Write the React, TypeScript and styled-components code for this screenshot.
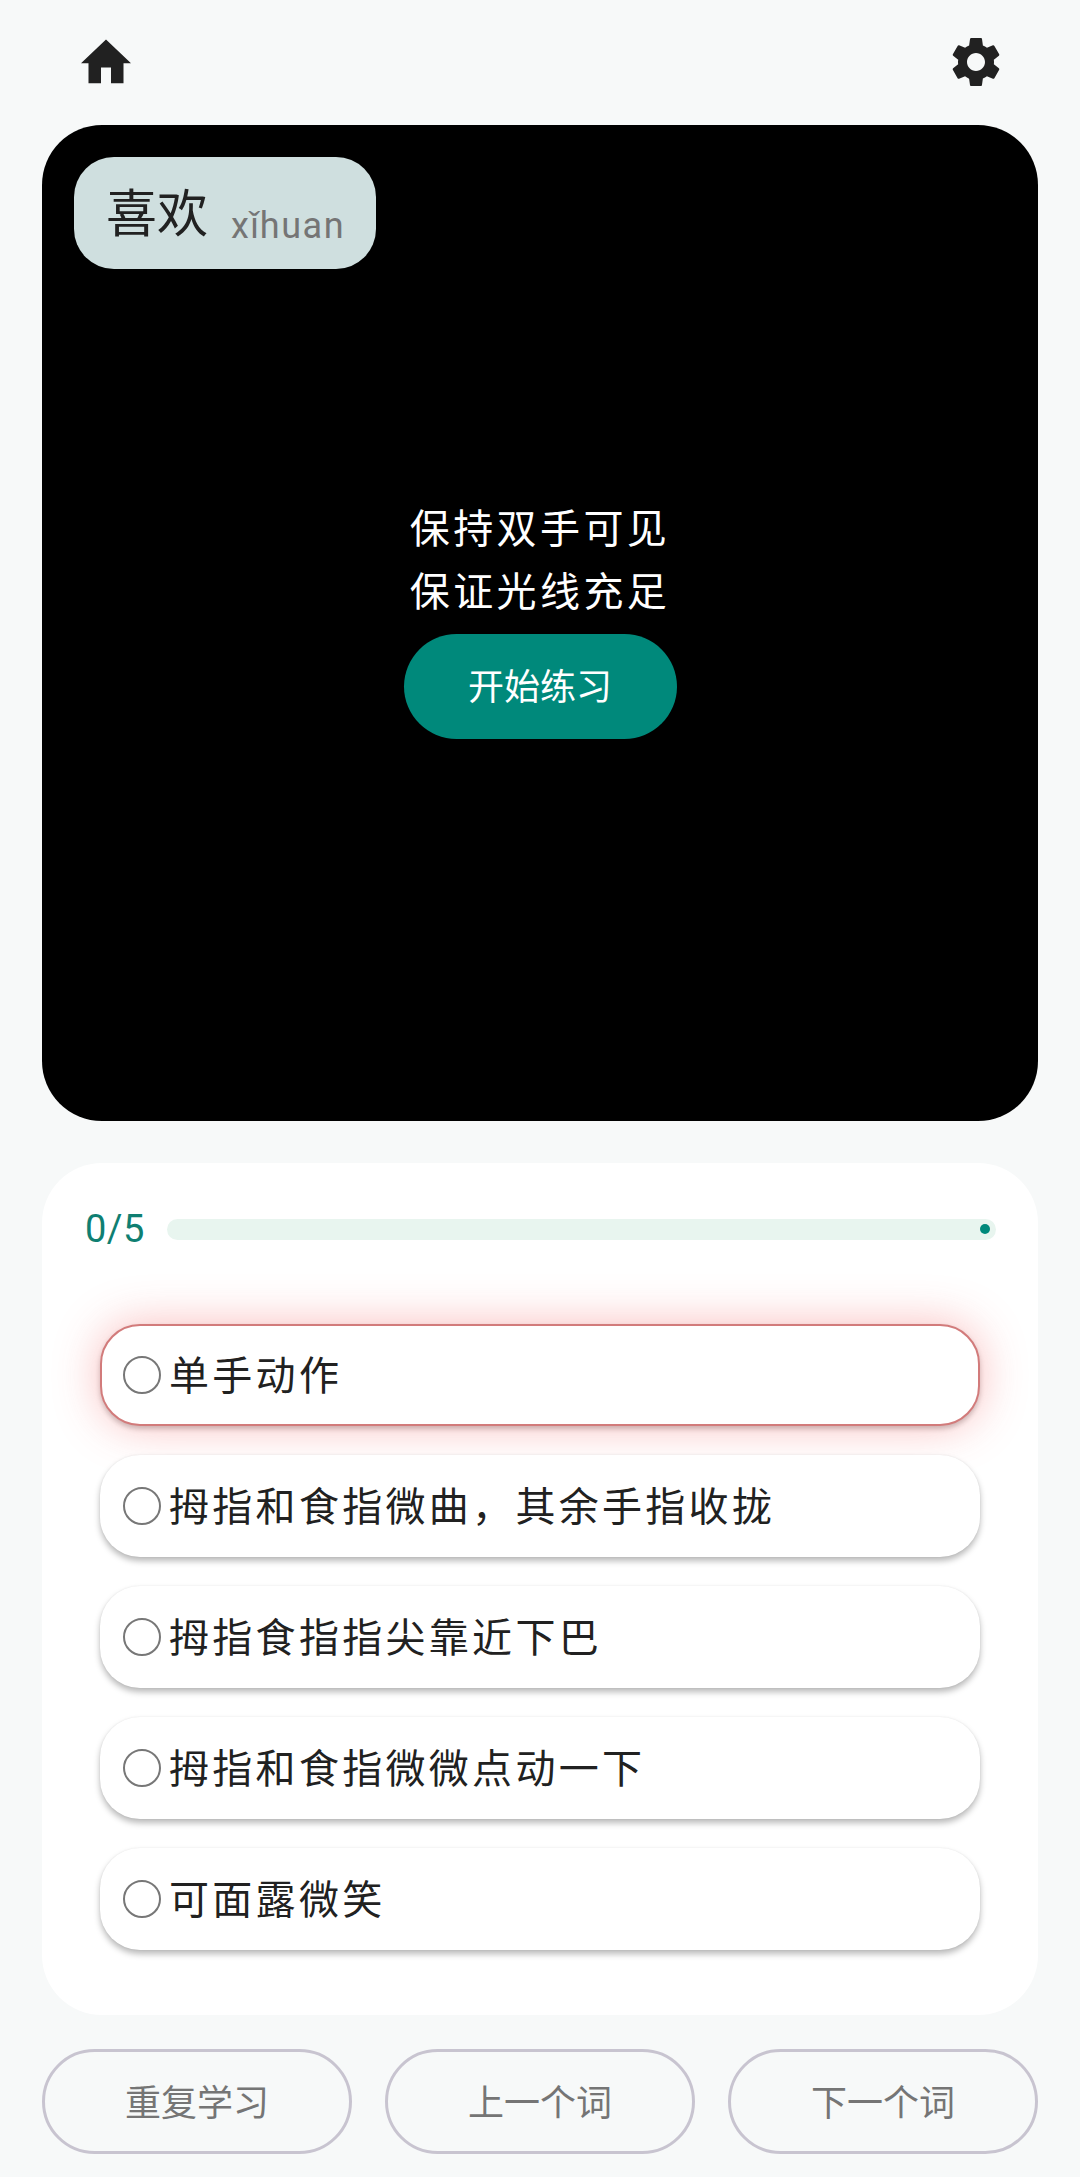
import React from "react";
import styled, { createGlobalStyle } from "styled-components";

const Global = createGlobalStyle`
  html, body { margin: 0; padding: 0; background: #f7f9f9; }
  * { box-sizing: border-box; }
  body { font-family: Roboto, "Noto Sans CJK SC", sans-serif; }
`;

const Page = styled.div`
  width: 1080px;
  height: 2177px;
  padding: 0 42px;
  background: #f7f9f9;
  display: flex;
  flex-direction: column;
  overflow: hidden;
`;

const Header = styled.header`
  height: 125px;
  display: flex;
  justify-content: space-between;
  align-items: flex-start;
  padding: 32px 32px 0 34px;
`;

const IconButton = styled.div`
  width: 60px;
  height: 60px;
  color: #212121;
  svg { display: block; width: 60px; height: 60px; fill: currentColor; }
`;

const Stage = styled.section`
  position: relative;
  height: 996px;
  border-radius: 60px;
  background: #000;
  display: flex;
  flex-direction: column;
  align-items: center;
  justify-content: center;
  padding-bottom: 13px;
`;

const WordChip = styled.div`
  position: absolute;
  left: 32px;
  top: 32px;
  width: 302px;
  height: 112px;
  padding: 0 0 0 32px;
  border-radius: 40px;
  background: #cfdfdf;
  display: flex;
  align-items: center;
  gap: 23px;
`;

const Word = styled.span`
  font-family: "Noto Sans CJK SC", sans-serif;
  font-size: 51px;
  color: #212121;
  line-height: 1;
  margin-top: -6px;
`;

const Pinyin = styled.span`
  font-family: Roboto, sans-serif;
  font-size: 36px;
  letter-spacing: 1.5px;
  color: #757575;
  line-height: 1;
  margin-top: 26px;
`;

const Hint = styled.p`
  margin: 0;
  font-family: "Noto Sans CJK SC", sans-serif;
  font-size: 40px;
  letter-spacing: 3.4px;
  line-height: 63px;
  color: #fff;
  text-align: center;
`;

const StartButton = styled.button`
  margin-top: 13px;
  width: 273px;
  height: 105px;
  padding: 0 0 4px;
  border: 0;
  border-radius: 53px;
  background: #00897b;
  color: #fff;
  font-family: "Noto Sans CJK SC", sans-serif;
  font-size: 36px;
`;

const Panel = styled.section`
  margin-top: 42px;
  height: 852px;
  border-radius: 60px;
  background: #fff;
  padding: 50px 42px 0 43px;
`;

const Progress = styled.div`
  display: flex;
  align-items: center;
  gap: 22px;
  height: 32px;
`;

const Count = styled.span`
  font-family: Roboto, sans-serif;
  font-size: 38px;
  color: #0f7f72;
  line-height: 1;
  letter-spacing: 0.5px;
`;

const Track = styled.div`
  flex: 1;
  height: 21px;
  border-radius: 11px;
  background: #e8f5ef;
  display: flex;
  justify-content: flex-end;
  align-items: center;
  padding-right: 6px;
`;

const Dot = styled.div`
  width: 10px;
  height: 10px;
  border-radius: 50%;
  background: #00897b;
`;

const Options = styled.div`
  margin: 79px 0 0 15px;
  width: 880px;
  display: flex;
  flex-direction: column;
  gap: 29px;
`;

const Option = styled.div<{ $flagged?: boolean }>`
  height: 102px;
  padding-left: ${(p) => (p.$flagged ? "21px" : "23px")};
  border-radius: 40px;
  background: #fff;
  display: flex;
  align-items: center;
  gap: 8px;
  border: ${(p) => (p.$flagged ? "2px solid #d27b7b" : "0")};
  box-shadow: ${(p) =>
    p.$flagged
      ? "0 0 46px rgba(240, 70, 70, 0.36), 0 3px 5px rgba(0, 0, 0, 0.22)"
      : "0 4px 6px rgba(0, 0, 0, 0.28), 0 0 2px rgba(0, 0, 0, 0.07)"};
`;

const Radio = styled.span`
  flex: none;
  width: 38px;
  height: 38px;
  border: 2px solid #777;
  border-radius: 50%;
`;

const OptionText = styled.span`
  font-family: "Noto Sans CJK SC", sans-serif;
  font-size: 40px;
  letter-spacing: 3.3px;
  color: #212121;
  line-height: 1;
  margin-top: -4px;
`;

const Footer = styled.footer`
  margin-top: 34px;
  display: grid;
  grid-template-columns: repeat(3, 310px);
  justify-content: space-between;
`;

const NavButton = styled.button`
  height: 105px;
  padding: 0 0 4px;
  border: 3px solid #c8c4d0;
  border-radius: 53px;
  background: transparent;
  color: #757575;
  font-family: "Noto Sans CJK SC", sans-serif;
  font-size: 36px;
`;

const options = [
  "单手动作",
  "拇指和食指微曲，其余手指收拢",
  "拇指食指指尖靠近下巴",
  "拇指和食指微微点动一下",
  "可面露微笑",
];

export default function App() {
  return (
    <Page>
      <Global />
      <Header>
        <IconButton>
          <svg viewBox="0 0 24 24"><path d="M10 20.5v-6.3h4v6.3h5v-8h3L12 3 2 12.5h3v8z" /></svg>
        </IconButton>
        <IconButton>
          <svg viewBox="0 0 24 24">
            <path d="M19.14 12.94c.04-.3.06-.61.06-.94 0-.32-.02-.64-.07-.94l2.03-1.58c.18-.14.23-.41.12-.61l-1.92-3.32c-.12-.22-.37-.29-.59-.22l-2.39.96c-.5-.38-1.03-.7-1.62-.94l-.36-2.54c-.04-.24-.24-.41-.48-.41h-3.84c-.24 0-.43.17-.47.41l-.36 2.54c-.59.24-1.13.57-1.62.94l-2.39-.96c-.22-.08-.47 0-.59.22L2.74 8.87c-.12.21-.08.47.12.61l2.03 1.58c-.05.3-.09.63-.09.94s.02.64.07.94l-2.03 1.58c-.18.14-.23.41-.12.61l1.92 3.32c.12.22.37.29.59.22l2.39-.96c.5.38 1.03.7 1.62.94l.36 2.54c.05.24.24.41.48.41h3.84c.24 0 .44-.17.47-.41l.36-2.54c.59-.24 1.13-.56 1.62-.94l2.39.96c.22.08.47 0 .59-.22l1.92-3.32c.12-.22.07-.47-.12-.61l-2.01-1.58zM12 15.6c-1.98 0-3.6-1.62-3.6-3.6s1.62-3.6 3.6-3.6 3.6 1.62 3.6 3.6-1.62 3.6-3.6 3.6z" />
          </svg>
        </IconButton>
      </Header>
      <Stage>
        <WordChip>
          <Word>喜欢</Word>
          <Pinyin>xǐhuan</Pinyin>
        </WordChip>
        <Hint>保持双手可见<br />保证光线充足</Hint>
        <StartButton>开始练习</StartButton>
      </Stage>
      <Panel>
        <Progress>
          <Count>0/5</Count>
          <Track><Dot /></Track>
        </Progress>
        <Options>
          {options.map((text, i) => (
            <Option key={text} $flagged={i === 0}>
              <Radio />
              <OptionText>{text}</OptionText>
            </Option>
          ))}
        </Options>
      </Panel>
      <Footer>
        <NavButton>重复学习</NavButton>
        <NavButton>上一个词</NavButton>
        <NavButton>下一个词</NavButton>
      </Footer>
    </Page>
  );
}
